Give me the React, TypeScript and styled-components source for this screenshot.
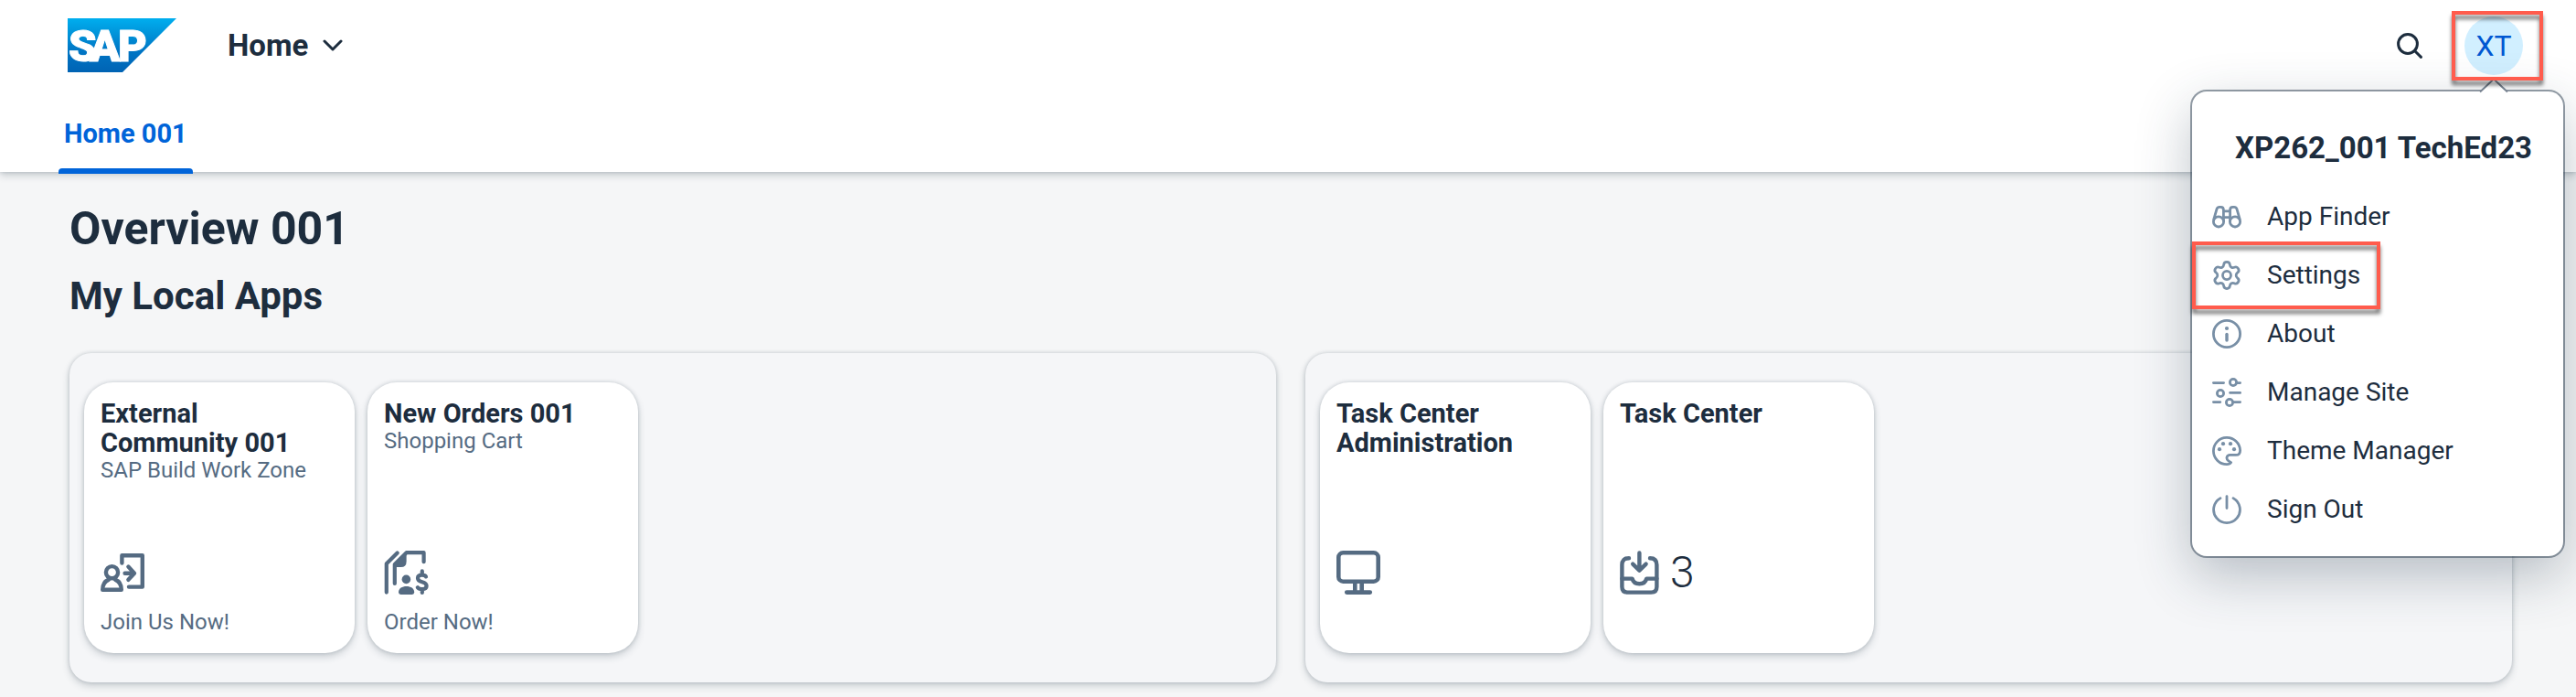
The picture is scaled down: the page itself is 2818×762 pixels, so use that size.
import React from 'react';
import styled, { createGlobalStyle } from 'styled-components';

const GlobalStyle = createGlobalStyle`
  *, *::before, *::after { box-sizing: border-box; }
  body {
    margin: 0;
    background: #f5f6f7;
    color: #1d2d3e;
    font-family: Roboto, "Liberation Sans", sans-serif;
  }
  h1, h2, h3, p, ul { margin: 0; padding: 0; }
  ul { list-style: none; }
  button { font: inherit; color: inherit; background: none; border: 0; padding: 0; cursor: pointer; }
  a { color: inherit; text-decoration: none; }
`;

const Header = styled.header`
  position: relative;
  z-index: 1;
  background: #fff;
  box-shadow: 0 0 4px rgba(34, 53, 72, 0.2), 0 4px 8px rgba(34, 53, 72, 0.2);
`;

const ShellBar = styled.div`
  display: flex;
  align-items: center;
  height: 100px;
  padding: 0 58px 0 74px;
`;

const HomeButton = styled.button`
  display: flex;
  align-items: center;
  gap: 16px;
  margin-left: 56px;
  font-size: 33px;
  line-height: 40px;
  font-weight: 700;
`;

const ShellActions = styled.div`
  display: flex;
  align-items: center;
  gap: 46px;
  margin-left: auto;
`;

const IconButton = styled.button`
  display: flex;
`;

const Account = styled.div`
  position: relative;
`;

const Avatar = styled.button`
  display: block;
  width: 64px;
  height: 64px;
  border-radius: 50%;
  background: #d1efff;
  color: #0057d2;
  font-size: 32px;
  line-height: 64px;
  text-align: center;
`;

const Highlight = styled.span`
  position: absolute;
  z-index: 3;
  border: 4px solid #ff5c4d;
  filter: drop-shadow(0 5px 2px rgba(0, 0, 0, 0.55));
  pointer-events: none;
`;

const AvatarHighlight = styled(Highlight)`
  inset: -6px -22px -6px -14px;
`;

const SettingsHighlight = styled(Highlight)`
  top: -5px;
  bottom: -5px;
  left: 0;
  width: 206px;
`;

const Popover = styled.div`
  position: absolute;
  z-index: 2;
  top: 82px;
  right: -44px;
  width: 406px;
  padding-bottom: 19px;
  border-radius: 16px;
  background: #fff;
  box-shadow: 0 0 0 2px rgba(34, 53, 72, 0.48), 0 20px 60px rgba(34, 53, 72, 0.3);
`;

const Arrow = styled.svg`
  position: absolute;
  top: -14px;
  right: 60px;
`;

const UserName = styled.h2`
  padding: 42px 34px 23px 0;
  font-size: 33px;
  line-height: 40px;
  font-weight: 700;
  text-align: right;
  white-space: nowrap;
`;

const MenuItem = styled.li`
  position: relative;
`;

const MenuButton = styled.button`
  display: flex;
  align-items: center;
  gap: 28px;
  width: 100%;
  height: 64px;
  padding-left: 22px;
  font-size: 28px;
  line-height: 32px;
  text-align: left;

  svg { color: #788fa6; }
`;

const Tabs = styled.nav`
  display: flex;
  height: 88px;
  padding-left: 64px;
`;

const Tab = styled.a`
  position: relative;
  padding: 28px 6px 0;
  color: #0064d9;
  font-size: 29px;
  line-height: 36px;
  font-weight: 700;

  &::after {
    content: '';
    position: absolute;
    left: 0;
    right: 0;
    bottom: -2px;
    height: 6px;
    border-radius: 4px 4px 0 0;
    background: #0064d9;
  }
`;

const Main = styled.main`
  padding: 32px 70px 16px 76px;
`;

const PageTitle = styled.h1`
  font-size: 50px;
  line-height: 60px;
  font-weight: 700;
`;

const SectionTitle = styled.h2`
  margin-top: 20px;
  font-size: 42px;
  line-height: 48px;
  font-weight: 700;
`;

const Sections = styled.div`
  display: grid;
  grid-template-columns: 1fr 1fr;
  gap: 32px;
  margin-top: 38px;
`;

const Section = styled.section`
  display: flex;
  gap: 14px;
  padding: 32px 16px;
  border-radius: 24px;
  background: #f5f6f8;
  box-shadow: 0 0 4px rgba(34, 53, 72, 0.2), 0 4px 8px rgba(34, 53, 72, 0.2);
`;

const TileLink = styled.a`
  display: flex;
  flex-direction: column;
  width: 296px;
  height: 296px;
  padding: 18px 18px 20px;
  border-radius: 32px;
  background: #fff;
  box-shadow: 0 0 4px rgba(34, 53, 72, 0.2), 0 4px 8px rgba(34, 53, 72, 0.2);
`;

const TileTitle = styled.h3`
  max-width: 230px;
  font-size: 29px;
  line-height: 32px;
  font-weight: 700;
`;

const TileNote = styled.p`
  min-height: 28px;
  color: #556b82;
  font-size: 24px;
  line-height: 28px;
`;

const TileContent = styled.div`
  display: flex;
  align-items: center;
  gap: 12px;
  height: 48px;
  margin: auto 0 16px;
  color: #556b82;
`;

const TileNumber = styled.span`
  color: #1d2d3e;
  font-size: 48px;
  line-height: 48px;
  font-weight: 300;
`;

const Svg = ({ size, stroke, children }: { size: number; stroke: number; children: React.ReactNode }) => (
  <svg width={size} height={size} viewBox={`0 0 ${size} ${size}`} fill="none" stroke="currentColor"
    strokeWidth={stroke} strokeLinecap="round" strokeLinejoin="round" aria-hidden="true">
    {children}
  </svg>
);

const SapLogo = () => (
  <svg width="119" height="60" viewBox="0 0 119 60" role="img" aria-label="SAP">
    <defs>
      <linearGradient id="sap" x1="0" y1="0" x2="0" y2="1">
        <stop offset="0" stopColor="#00aeef" />
        <stop offset="0.25" stopColor="#0097dc" />
        <stop offset="0.6" stopColor="#0076c5" />
        <stop offset="1" stopColor="#0063b4" />
      </linearGradient>
    </defs>
    <path d="M0 0H119L60 59H0Z" fill="url(#sap)" />
    <text x="1 24 55" y="47" fill="#fff" stroke="#fff" strokeWidth="1" fontFamily="Roboto, sans-serif" fontSize="49" fontWeight="900">SAP</text>
  </svg>
);

const Chevron = () => (
  <svg width="22" height="14" viewBox="0 0 22 14" fill="none" stroke="currentColor" strokeWidth="3"
    strokeLinecap="round" strokeLinejoin="round" aria-hidden="true">
    <path d="M2 2L11 11L20 2" />
  </svg>
);

const SearchIcon = () => (
  <Svg size={28} stroke={3}>
    <circle cx="12" cy="12" r="10.4" />
    <path d="M19.5 19.5L26.4 26.4" />
  </Svg>
);

const JoinIcon = () => (
  <Svg size={48} stroke={4.4}>
    <circle cx="12.5" cy="23.7" r="6.6" />
    <path d="M9 31.6C4.6 33.4 2.2 37 2.2 42.8H22.8C22.8 37 20.4 33.4 16 31.6" />
    <path d="M23.4 13.6V5.2H45.8V39.6H31" />
    <path d="M26.6 24.7H36.5M30.4 17.6L37 24.7L30.4 31.8" />
  </Svg>
);

const OrdersIcon = () => (
  <Svg size={49} stroke={4.2}>
    <path d="M2.8 45.6V14.2L14.6 2.4" />
    <path d="M11.8 36V15L24.6 2.2H43.6V12.2" />
    <path d="M24.6 2.2V12Q24.6 18 18.6 18H11.8V15Z" fill="currentColor" stroke="none" />
    <circle cx="24.4" cy="31.4" r="4.8" fill="currentColor" stroke="none" />
    <path d="M16 45.6C16 41 20 39 24.6 39S33.2 41 33.2 45.6Q33.2 48 30.8 48H18.4Q16 48 16 45.6Z" fill="currentColor" stroke="none" />
    <path d="M46 28.4Q45 26.6 41.8 26.6Q37 26.6 37 30Q37 33 41.8 34.2Q46.6 35.4 46.6 38.6Q46.6 42.2 41.8 42.2Q38 42.2 36.8 40.2M41.8 22.4V26M41.8 43V46" />
  </Svg>
);

const MonitorIcon = () => (
  <Svg size={48} stroke={4.6}>
    <rect x="2.3" y="2.3" width="43.4" height="31.4" rx="5" />
    <path d="M20.3 36V44M27.7 36V44M11.2 45.6H36.8" />
  </Svg>
);

const InboxIcon = () => (
  <svg width="43" height="48" viewBox="0 0 43 48" fill="none" stroke="currentColor" strokeWidth="4.4"
    strokeLinecap="round" strokeLinejoin="round" aria-hidden="true">
    <path d="M10 8.2Q2.4 8.2 2.4 15.5V39.5Q2.4 45.6 8.5 45.6H34.3Q40.4 45.6 40.4 39.5V15.5Q40.4 8.2 33 8.2" />
    <path d="M2.4 30.6H13.6Q15 36.2 21.4 36.2T29.2 30.6H40.4" />
    <path d="M21.4 2.4V21M14.2 14.6L21.4 21.6L28.6 14.6" />
  </svg>
);

const FinderIcon = () => (
  <Svg size={32} stroke={2.8}>
    <circle cx="7" cy="21.4" r="5.6" />
    <circle cx="25" cy="21.4" r="5.6" />
    <path d="M1.8 18.6L5 7.6Q5.8 5.4 8 5.4H9.4Q12.4 5.4 12.4 8.4V20.6M30.2 18.6L27 7.6Q26.2 5.4 24 5.4H22.6Q19.6 5.4 19.6 8.4V20.6M12.6 9.8H19.4M12.6 16.6H19.4" />
  </Svg>
);

const SettingsIcon = () => (
  <svg width="32" height="32" viewBox="1 1 22 22" fill="none" stroke="currentColor" strokeWidth="1.9"
    strokeLinecap="round" strokeLinejoin="round" aria-hidden="true">
    <path d="M9.671 4.136a2.34 2.34 0 0 1 4.659 0 2.34 2.34 0 0 0 3.319 1.915 2.34 2.34 0 0 1 2.33 4.033 2.34 2.34 0 0 0 0 3.831 2.34 2.34 0 0 1-2.33 4.033 2.34 2.34 0 0 0-3.319 1.915 2.34 2.34 0 0 1-4.659 0 2.34 2.34 0 0 0-3.32-1.915 2.34 2.34 0 0 1-2.33-4.033 2.34 2.34 0 0 0 0-3.831A2.34 2.34 0 0 1 6.35 6.051a2.34 2.34 0 0 0 3.319-1.915" />
    <circle cx="12" cy="12" r="3.1" />
  </svg>
);

const InfoIcon = () => (
  <Svg size={32} stroke={2.8}>
    <circle cx="16" cy="16" r="14.6" />
    <path d="M16 16.4V23" strokeWidth="3.4" />
    <circle cx="16" cy="10" r="2.1" fill="currentColor" stroke="none" />
  </Svg>
);

const SlidersIcon = () => (
  <Svg size={32} stroke={2.8}>
    <path d="M1.4 5.6H12.6M27 5.6H30.6M19.6 16.4H30.6M1.4 26.6H8.8M23 26.6H30.6" />
    <circle cx="23" cy="5" r="3.6" />
    <circle cx="9" cy="17" r="3.6" />
    <circle cx="19" cy="27" r="3.6" />
  </Svg>
);

const PaletteIcon = () => (
  <Svg size={32} stroke={2.8}>
    <path d="M16 30.6A14.6 14.6 0 1 1 30.6 15.4C30.6 18.8 28.6 20.4 26 20.4H19.6C15.6 20.4 14.8 24.8 17.8 26.8L20.6 28.6Q19.4 30.6 16 30.6Z" />
    <g fill="currentColor" stroke="none">
      <circle cx="12" cy="8.2" r="2.1" />
      <circle cx="20" cy="8.2" r="2.1" />
      <circle cx="8" cy="14.2" r="2.1" />
      <circle cx="24" cy="14.2" r="2.1" />
    </g>
  </Svg>
);

const PowerIcon = () => (
  <Svg size={32} stroke={2.8}>
    <path d="M9 3.6A14.4 14.4 0 1 0 23 3.6M16 1.6V14.6" />
  </Svg>
);

const menu = [
  { label: 'App Finder', icon: <FinderIcon /> },
  { label: 'Settings', icon: <SettingsIcon />, highlighted: true },
  { label: 'About', icon: <InfoIcon /> },
  { label: 'Manage Site', icon: <SlidersIcon /> },
  { label: 'Theme Manager', icon: <PaletteIcon /> },
  { label: 'Sign Out', icon: <PowerIcon /> },
];

type TileProps = { title: string; subtitle?: string; icon: React.ReactNode; value?: string; footer?: string };

const Tile = ({ title, subtitle, icon, value, footer }: TileProps) => (
  <TileLink href="#">
    <TileTitle>{title}</TileTitle>
    {subtitle && <TileNote>{subtitle}</TileNote>}
    <TileContent>
      {icon}
      {value && <TileNumber>{value}</TileNumber>}
    </TileContent>
    <TileNote>{footer}</TileNote>
  </TileLink>
);

export default function App() {
  return (
    <>
      <GlobalStyle />
      <Header>
        <ShellBar>
          <SapLogo />
          <HomeButton>Home <Chevron /></HomeButton>
          <ShellActions>
            <IconButton aria-label="Search"><SearchIcon /></IconButton>
            <Account>
              <Avatar aria-haspopup="menu">XT</Avatar>
              <AvatarHighlight />
              <Popover>
                <Arrow width="32" height="17" viewBox="0 0 32 17" aria-hidden="true">
                  <path d="M0 17V15L16 0L32 15V17Z" fill="#fff" />
                  <path d="M1 14.5L16 0.5L31 14.5" fill="none" stroke="#788391" strokeWidth="2" />
                </Arrow>
                <UserName>XP262_001 TechEd23</UserName>
                <ul>
                  {menu.map((item) => (
                    <MenuItem key={item.label}>
                      <MenuButton>{item.icon}{item.label}</MenuButton>
                      {item.highlighted && <SettingsHighlight />}
                    </MenuItem>
                  ))}
                </ul>
              </Popover>
            </Account>
          </ShellActions>
        </ShellBar>
        <Tabs>
          <Tab href="#" aria-current="page">Home 001</Tab>
        </Tabs>
      </Header>
      <Main>
        <PageTitle>Overview 001</PageTitle>
        <SectionTitle>My Local Apps</SectionTitle>
        <Sections>
          <Section>
            <Tile title="External Community 001" subtitle="SAP Build Work Zone" icon={<JoinIcon />} footer="Join Us Now!" />
            <Tile title="New Orders 001" subtitle="Shopping Cart" icon={<OrdersIcon />} footer="Order Now!" />
          </Section>
          <Section>
            <Tile title="Task Center Administration" icon={<MonitorIcon />} />
            <Tile title="Task Center" icon={<InboxIcon />} value="3" />
          </Section>
        </Sections>
      </Main>
    </>
  );
}
